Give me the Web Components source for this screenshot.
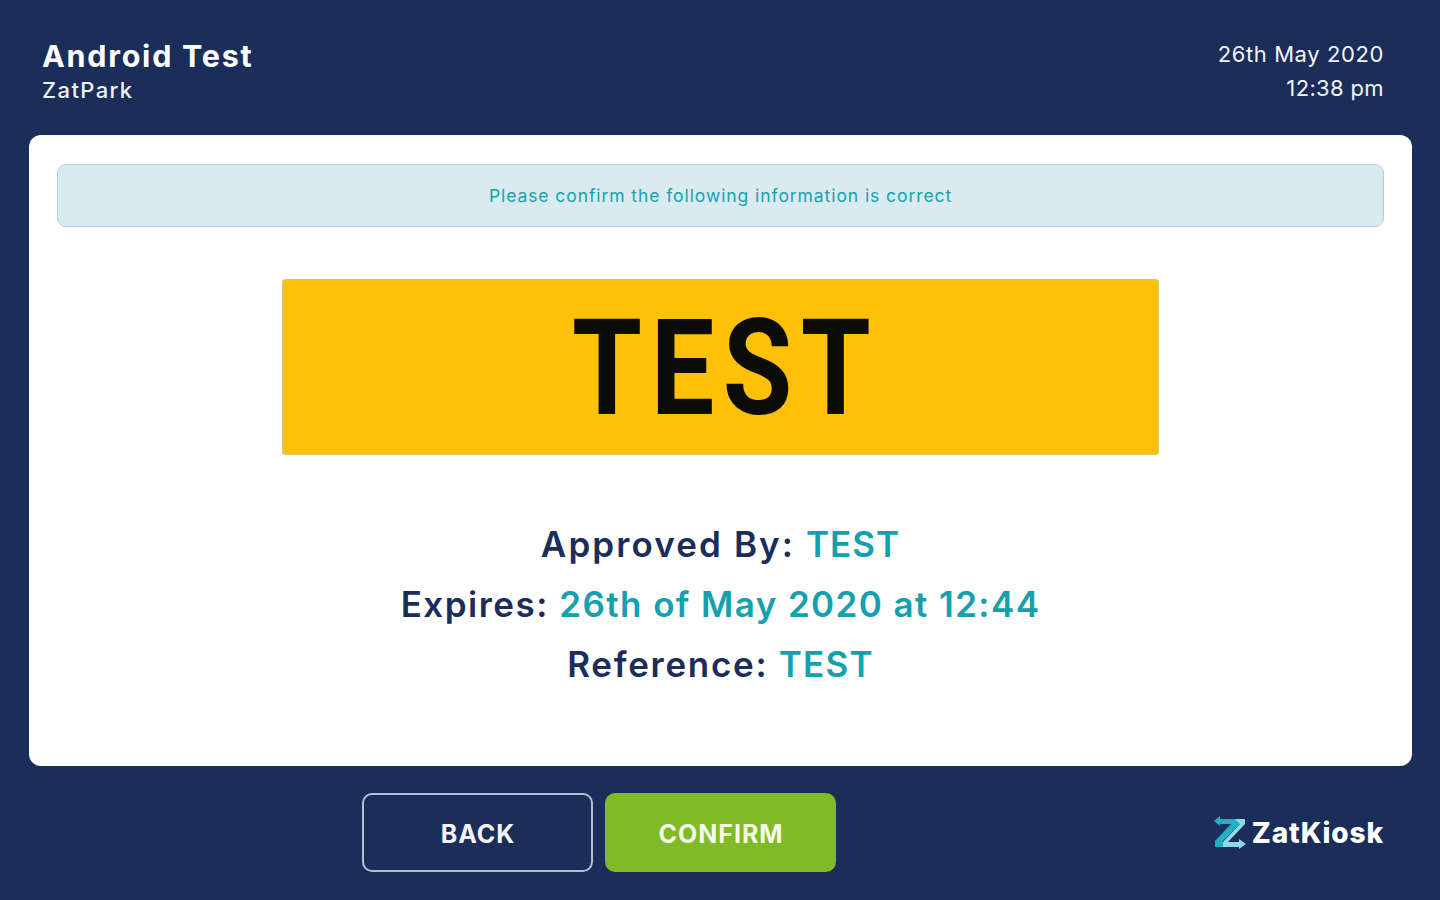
<!DOCTYPE html>
<html lang="en"><head><meta charset="utf-8"><title>ZatKiosk</title>
<style>
html,body{margin:0;padding:0;height:100%;background:#1b2d59}
body{font-family:"Inter","Open Sans",sans-serif}
</style></head><body>
<kiosk-app>
  <kiosk-header slot="header" title-text="Android Test" sub="ZatPark" date="26th May 2020" time="12:38 pm"></kiosk-header>
  <kiosk-card slot="card">
    <info-banner>Please confirm the following information is correct</info-banner>
    <number-plate>TEST</number-plate>
    <detail-list>
      <detail-line label="Approved By:" style="--ls:2.1px;--vs:1.0px">TEST</detail-line>
      <detail-line label="Expires:" style="--ls:1.5px;--vs:1.4px">26th of May 2020 at 12:44</detail-line>
      <detail-line label="Reference:">TEST</detail-line>
    </detail-list>
  </kiosk-card>
  <kiosk-footer slot="footer">
    <kiosk-button slot="back" variant="outline">BACK</kiosk-button>
    <kiosk-button slot="confirm" variant="solid">CONFIRM</kiosk-button>
    <kiosk-logo slot="logo"></kiosk-logo>
  </kiosk-footer>
</kiosk-app>
<script>
function def(name, css, html){
  customElements.define(name, class extends HTMLElement{
    connectedCallback(){
      if(this.shadowRoot) return;
      const s=this.attachShadow({mode:'open'});
      const a=n=>this.getAttribute(n)||'';
      s.innerHTML='<style>'+css+'</style>'+(typeof html==='function'?html(a):html);
    }
  });
}
const FONT='"Inter","Open Sans",sans-serif';
def('kiosk-app',
 ':host{display:flex;flex-direction:column;width:1440px;height:900px;overflow:hidden;background:#1b2d59}',
 '<slot name="header"></slot><slot name="card"></slot><slot name="footer"></slot>');
def('kiosk-header',
 ':host{display:flex;justify-content:space-between;height:135px;box-sizing:border-box;padding:37px 56px 0 42px;color:#fff;font-family:'+FONT+'}'+
 '.t{font-size:30.5px;font-weight:700;line-height:38px;letter-spacing:1.75px}'+
 '.s{font-size:22px;font-weight:500;line-height:30px;color:#eef1f5;letter-spacing:1.4px}'+
 '.r{text-align:right;font-size:22px;font-weight:400;line-height:34px;color:#f2f4f7;letter-spacing:.6px}'+
 '.tm{letter-spacing:.35px}',
 a=>`<div><div class="t">${a('title-text')}</div><div class="s">${a('sub')}</div></div><div class="r"><div>${a('date')}</div><div class="tm">${a('time')}</div></div>`);
def('kiosk-card',
 ':host{display:block;box-sizing:border-box;width:1383px;height:631px;margin-left:29px;background:#fff;border-radius:12px;padding:29px 28px 0 28px}',
 '<slot></slot>');
def('info-banner',
 ':host{display:flex;align-items:center;justify-content:center;box-sizing:border-box;height:63px;background:#d9eaf0;border:1.5px solid #a9d5d8;border-radius:9px;color:#14a3ad;font-family:'+FONT+';font-size:17.5px;font-weight:400;letter-spacing:.92px}',
 '<slot></slot>');
def('number-plate',
 ':host{display:flex;align-items:center;justify-content:center;box-sizing:border-box;width:877px;height:176px;margin:52px auto 0;background:#fec107;border:1.5px solid #c9c98a;border-radius:3px;color:#0b0b08;font-family:"Roboto","Liberation Sans",sans-serif}'+
 'span{display:inline-block;font-size:133px;font-weight:700;line-height:1;letter-spacing:10px;transform:scaleX(.85);margin:2px 0 0 10px}',
 '<span><slot></slot></span>');
def('detail-list',
 ':host{display:flex;flex-direction:column;align-items:center;margin-top:59px}',
 '<slot></slot>');
def('detail-line',
 ':host{display:block;font-family:'+FONT+';font-size:35px;font-weight:600;line-height:60px;color:#1b2d59;white-space:nowrap;letter-spacing:var(--ls,1.7px)}'+
 'b{font-weight:600;color:#14a0ae;letter-spacing:var(--vs,1.2px)}',
 a=>`${a('label')} <b><slot></slot></b>`);
def('kiosk-footer',
 ':host{display:grid;grid-template-columns:1fr 231px 1fr;column-gap:12px;align-items:start;padding-top:27px}'+
 '.a{justify-self:end}.l{justify-self:end;padding-right:56px;margin-top:23px}',
 '<div class="a"><slot name="back"></slot></div><div><slot name="confirm"></slot></div><div class="l"><slot name="logo"></slot></div>');
def('kiosk-button',
 ':host{display:flex;align-items:center;justify-content:center;box-sizing:border-box;width:231px;height:79px;padding:2px 0 0 2px;border-radius:10px;font-family:'+FONT+';font-size:25px;font-weight:700;letter-spacing:1px;color:#fff}'+
 ':host([variant=outline]){border:2px solid #b4c0cf;background:#1b2d59;color:#f3f4f7}'+
 ':host([variant=solid]){background:#80ba27;color:#f4f9ea}',
 '<slot></slot>');
def('kiosk-logo',
 ':host{display:flex;align-items:center;gap:6px;height:33px;color:#fff;font-family:'+FONT+';font-weight:800;font-size:28px;letter-spacing:.9px}',
 `<svg width="32" height="33" viewBox="0 0 32 33" aria-hidden="true">
   <path d="M6 0 L0 5 L6 10 V8 H17 L1 25 V31 H17 L21 26 H8 L26 8 V3 H6 Z" fill="#1fb0c4"/>
   <path d="M21 3 H31 V8 L14 26 H25 V23 L32 28 L25 33 V31 H9 V26 L26 8 Z" fill="#8fd9e6"/>
  </svg><span>ZatKiosk</span>`);
</script>
</body></html>
